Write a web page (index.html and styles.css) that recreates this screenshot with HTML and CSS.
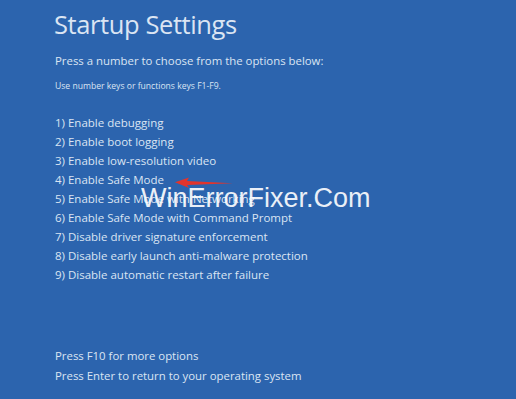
FILE: index.html
```html
<!DOCTYPE html>
<html>
<head>
<meta charset="utf-8">
<link rel="stylesheet" href="styles.css">
</head>
<body>
<div class="screen">
  <h1 class="title">Startup Settings</h1>
  <p class="lead">Press a number to choose from the options below:</p>
  <p class="hint">Use number keys or functions keys F1-F9.</p>
  <ol class="options">
    <li>1) Enable debugging</li>
    <li>2) Enable boot logging</li>
    <li>3) Enable low-resolution video</li>
    <li class="safe">4) Enable Safe Mode
      <svg class="arrow" width="62" height="12" viewBox="0 0 62 12"><path d="M1 5.2 L15 0.5 L13 4 L59 6.2 L13 8 L15 11 Z" fill="#e2342c"/></svg>
    </li>
    <li>5) Enable Safe Mode with Networking</li>
    <li>6) Enable Safe Mode with Command Prompt</li>
    <li>7) Disable driver signature enforcement</li>
    <li>8) Disable early launch anti-malware protection</li>
    <li>9) Disable automatic restart after failure</li>
  </ol>
  <div class="footer">
    <p>Press F10 for more options</p>
    <p>Press Enter to return to your operating system</p>
  </div>
  <div class="watermark">WinErrorFixer.Com</div>
</div>
</body>
</html>
```
FILE: styles.css
```css
html, body {
  margin: 0;
  padding: 0;
  background: #2c64ae;
}
.screen {
  position: relative;
  width: 516px;
  height: 399px;
  box-sizing: border-box;
  padding: 6px 0 0 55px;
  font-family: "Open Sans", "Noto Sans", sans-serif;
  color: #dbe5f3;
  overflow: hidden;
}
.title {
  margin: 0 0 0 -1px;
  font-size: 25.5px;
  font-weight: 400;
  letter-spacing: -0.4px;
  line-height: 36px;
}
.lead {
  margin: 11px 0 0;
  font-size: 11.4px;
  line-height: 16px;
}
.hint {
  margin: 11px 0 0;
  font-size: 8.6px;
  line-height: 12px;
}
.options {
  list-style: none;
  margin: 21px 0 0;
  padding: 0;
  font-size: 11.5px;
  line-height: 19px;
}
.options li {
  position: relative;
}
.arrow {
  position: absolute;
  left: 119px;
  top: 7px;
}
.footer {
  position: absolute;
  left: 55px;
  top: 346px;
  font-size: 11.4px;
  line-height: 20px;
}
.footer p { margin: 0; }
.watermark {
  position: absolute;
  left: 141px;
  top: 181px;
  font-family: "Liberation Sans", Arial, sans-serif;
  font-size: 27px;
  line-height: 34px;
  color: #ffffff;
  opacity: 0.9;
}
```
